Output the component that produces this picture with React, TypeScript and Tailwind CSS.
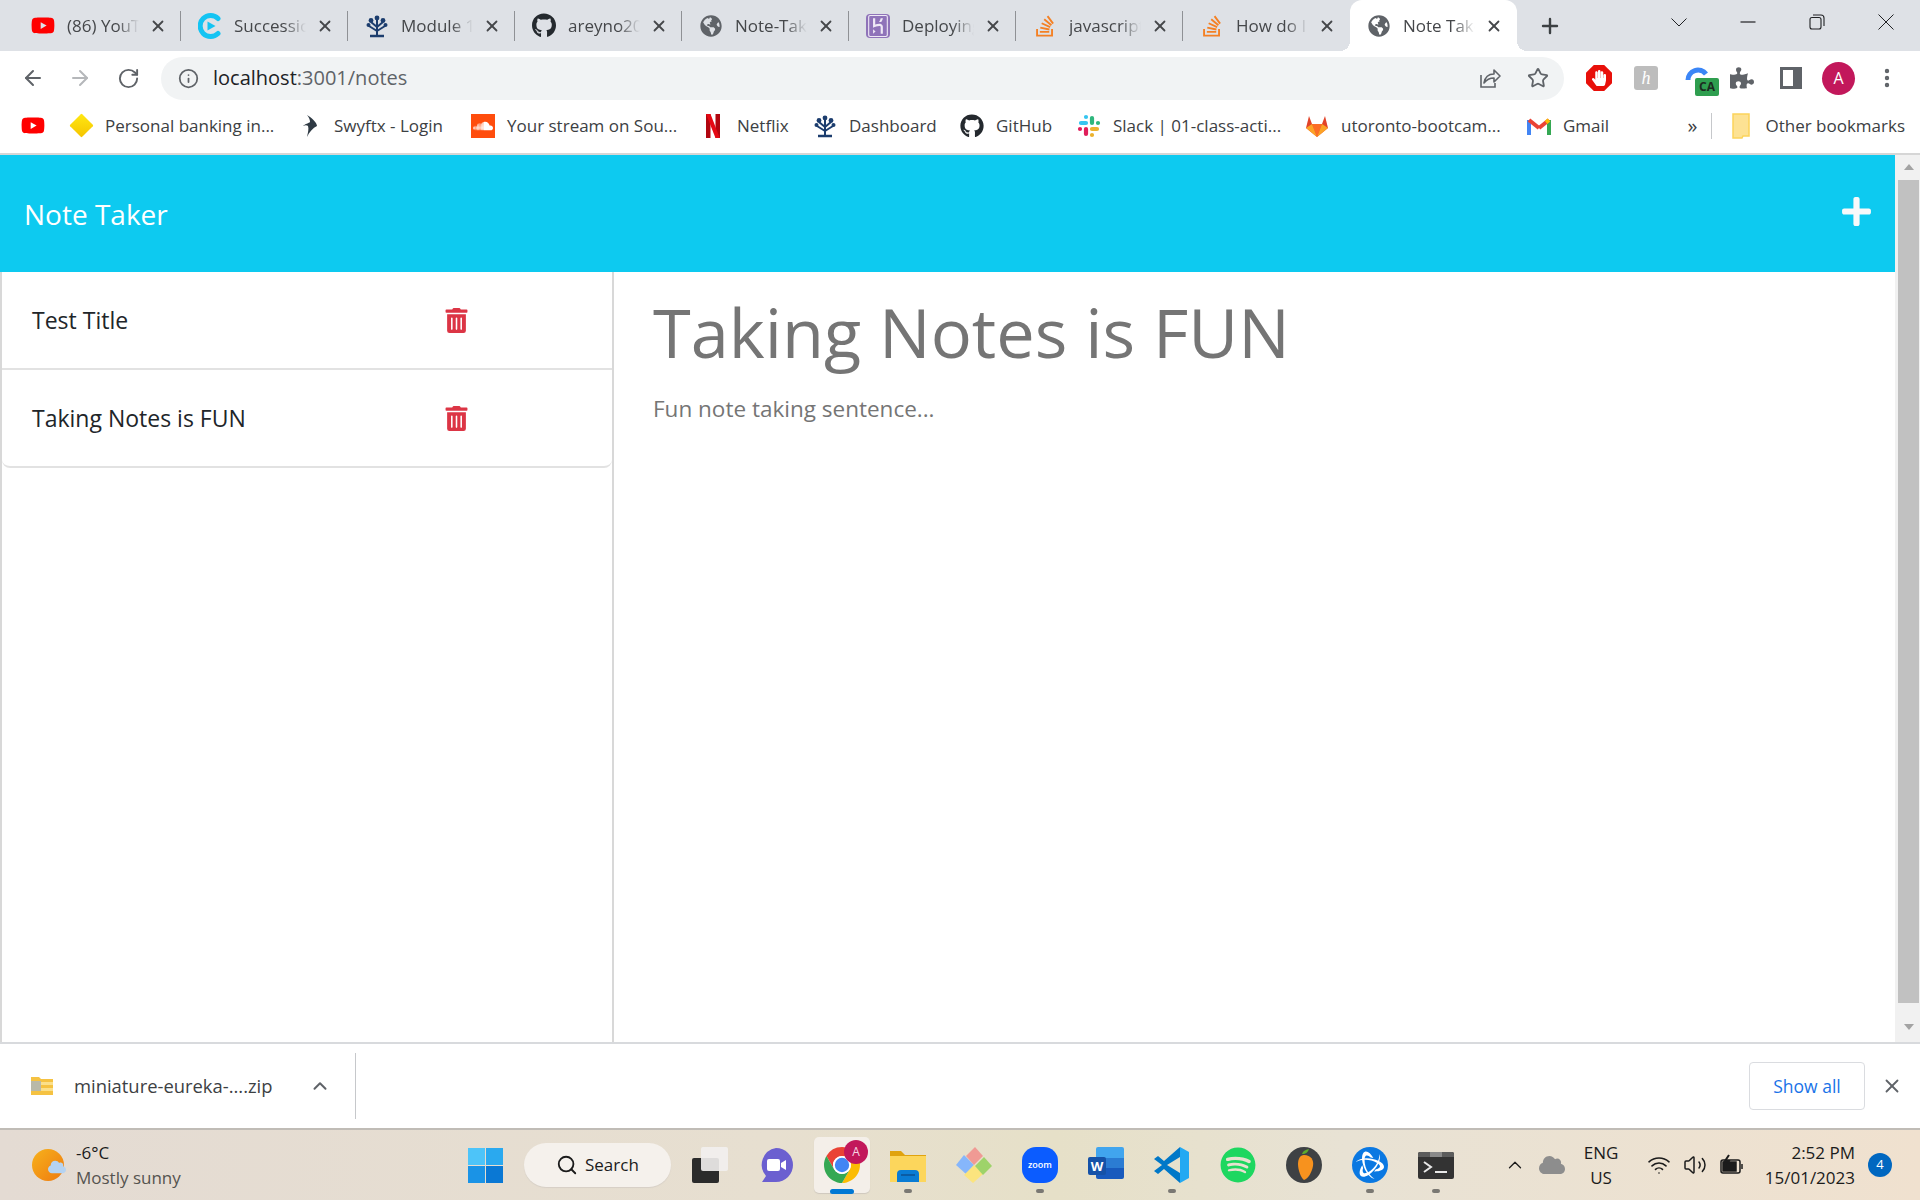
import { ArrowLeft, ArrowRight, ChevronUp, Info, MoreVertical, Plus, RotateCw, Search, Star, Volume2, Wifi, X } from "lucide-react";
import { FaCloud, FaGithub, FaGlobeAmericas, FaHandPaper, FaPlus, FaPuzzlePiece, FaSpotify, FaStackOverflow, FaTrashAlt, FaYoutube, FaSoundcloud } from "react-icons/fa";
import { SiBattledotnet, SiHeroku } from "react-icons/si";

const font = "font-['Open_Sans','Noto_Sans',sans-serif]";

function Tree({ size = 24 }: { size?: number }) {
  return (
    <svg width={size} height={size} viewBox="0 0 24 24" fill="none" stroke="#1c3d6e" strokeWidth="2">
      <path d="M12 21V5M12 13 6 8M12 13l6-5M12 17 4 12M12 17l8-5" />
      <path d="M5 22h14" strokeWidth="2.5" />
      <circle cx="12" cy="4" r="2.4" fill="#1c3d6e" stroke="none" />
      <circle cx="6" cy="6.5" r="2.4" fill="#1c3d6e" stroke="none" />
      <circle cx="18" cy="6.5" r="2.4" fill="#1c3d6e" stroke="none" />
      <circle cx="3.5" cy="11" r="2" fill="#1c3d6e" stroke="none" />
      <circle cx="20.5" cy="11" r="2" fill="#1c3d6e" stroke="none" />
    </svg>
  );
}

function SuccessIcon() {
  return (
    <svg width="24" height="26" viewBox="0 0 24 26">
      <path d="M20 5.5A10.5 10.5 0 1 0 20 20.5" fill="none" stroke="#14c4f3" strokeWidth="5" strokeLinecap="round" />
      <path d="M9.5 8.5 17.5 13l-8 4.500z" fill="#14c4f3" />
    </svg>
  );
}

function Globe() {
  return <FaGlobeAmericas size={22} color="#5f6368" />;
}

function HerokuIcon() {
  return (
    <span className="flex h-[24px] w-[24px] items-center justify-center rounded-[4px] bg-[#8f73b9]">
      <SiHeroku size={22} color="#eee8f5" />
    </span>
  );
}

const tabs = [
  { title: "(86) YouTube", icon: <FaYoutube size={25} color="#f00" /> },
  { title: "Succession", icon: <SuccessIcon /> },
  { title: "Module 13", icon: <Tree /> },
  { title: "areyno2022", icon: <FaGithub size={25} color="#24292e" /> },
  { title: "Note-Taker", icon: <Globe /> },
  { title: "Deploying", icon: <HerokuIcon /> },
  { title: "javascript", icon: <FaStackOverflow size={24} color="#f48024" /> },
  { title: "How do I", icon: <FaStackOverflow size={24} color="#f48024" /> },
];

function Tab({ title, icon, active, divider }: { title: string; icon: React.ReactNode; active?: boolean; divider?: boolean }) {
  return (
    <div
      className={
        active
          ? "relative flex h-[51px] w-[167px] items-center rounded-t-[12px] bg-white pl-[17px] before:absolute before:bottom-0 before:left-[-10px] before:h-[10px] before:w-[10px] before:bg-[radial-gradient(circle_at_0_0,#dee1e6_10px,#fff_10px)] after:absolute after:bottom-0 after:right-[-10px] after:h-[10px] after:w-[10px] after:bg-[radial-gradient(circle_at_100%_0,#dee1e6_10px,#fff_10px)]"
          : "relative flex h-[51px] w-[167px] items-center pl-[17px]"
      }
    >
      <span className="flex w-[24px] justify-center">{icon}</span>
      <span className="ml-[12px] w-[72px] overflow-hidden whitespace-nowrap text-[17px] text-[#45474a] [mask-image:linear-gradient(to_right,#000_70%,transparent)]">
        {title}
      </span>
      <X size={18} strokeWidth={2.4} className="ml-[10px] text-[#45474a]" />
      {divider && <span className="absolute right-0 top-[11px] h-[30px] w-px bg-[#8f9195]" />}
    </div>
  );
}

function TabStrip() {
  return (
    <div className="flex h-[51px] items-center bg-[#dee1e6] pl-[14px]">
      {tabs.map((t, i) => (
        <Tab key={i} title={t.title} icon={t.icon} divider={i < 7} />
      ))}
      <Tab title="Note Taker" icon={<Globe />} active />
      <Plus size={24} strokeWidth={2.4} className="ml-[21px] text-[#3c4043]" />
      <div className="mb-[8px] ml-auto flex items-center">
        <svg width="22" height="22" viewBox="0 0 22 22" fill="none" stroke="#202124" strokeWidth="1" className="mr-[48px]">
          <path d="M3.500 7.500 11 15l7.500-7.500" />
        </svg>
        <svg width="20" height="20" viewBox="0 0 20 20" fill="none" stroke="#202124" strokeWidth="1.200" className="mr-[51px]">
          <path d="M2.500 10h15" />
        </svg>
        <svg width="16" height="16" viewBox="0 0 16 16" fill="none" stroke="#202124" strokeWidth="1.100" className="mr-[50px]">
          <rect x="1" y="3.500" width="11" height="11.500" rx="2" />
          <path d="M4 1h8a3 3 0 0 1 3 3v8" />
        </svg>
        <svg width="22" height="22" viewBox="0 0 22 22" fill="none" stroke="#202124" strokeWidth="1" className="mr-[23px]">
          <path d="M3.500 3.500l15 15M18.500 3.500l-15 15" />
        </svg>
      </div>
    </div>
  );
}

function ShareIcon() {
  return (
    <svg width="24" height="24" viewBox="0 0 24 24" fill="none" stroke="#5f6368" strokeWidth="1.600" className="ml-auto">
      <path d="M3 9v12h14v-4" />
      <path d="M6 17c1-6 5-9 10-9V4l6 6-6 6v-4c-4 0-7 1-10 5z" strokeLinejoin="round" />
    </svg>
  );
}

function Toolbar() {
  return (
    <div className="flex h-[51px] items-center bg-white pl-[21px] pt-[3px] text-[#5f6368]">
      <ArrowLeft size={24} strokeWidth={2} />
      <ArrowRight size={24} strokeWidth={2} className="ml-[23px] text-[#b5b7ba]" />
      <RotateCw size={23} strokeWidth={2} className="ml-[25px]" />
      <div className="ml-[21px] flex h-[43px] w-[1403px] items-center rounded-full bg-[#f1f3f4] pl-[17px] pr-[15px]">
        <Info size={21} strokeWidth={2} />
        <span className="ml-[14px] text-[20px] text-[#202124]">
          localhost<span className="text-[#5f6368]">:3001/notes</span>
        </span>
        <ShareIcon />
        <Star size={22} strokeWidth={2} className="ml-[25px]" />
      </div>
      <div className="ml-[22px] flex items-center">
        <span className="relative flex h-[26px] w-[26px] items-center justify-center bg-[#e8100a] [clip-path:polygon(30%_0,70%_0,100%_30%,100%_70%,70%_100%,30%_100%,0_70%,0_30%)]">
          <FaHandPaper size={16} color="#fff" />
        </span>
        <span className="ml-[22px] flex h-[24px] w-[24px] items-center justify-center rounded-[3px] bg-[#bdbdbd] font-['Liberation_Serif',serif] text-[18px] italic leading-none text-white">
          h
        </span>
        <span className="relative ml-[27px] h-[32px] w-[32px]">
          <svg width="24" height="20" viewBox="0 0 24 20" fill="none" className="absolute left-0 top-0">
            <path d="M3 18A10 10 0 0 1 21 12" stroke="#3b86f7" strokeWidth="5" />
          </svg>
          <span className="absolute bottom-[-2px] right-[-2px] flex h-[18px] w-[24px] items-center justify-center rounded-[2px] bg-[#2e9e4f] text-[12px] font-bold leading-none text-[#1c2b20]">
            CA
          </span>
        </span>
        <FaPuzzlePiece size={24} className="ml-[13px]" />
        <span className="ml-[26px] flex h-[22px] w-[22px] justify-start border-[3px] border-r-[9px] border-[#5f6368]" />
        <span className="ml-[20px] flex h-[33px] w-[33px] items-center justify-center rounded-full bg-[#c2185b] text-[16px] text-white">A</span>
        <MoreVertical size={24} strokeWidth={2.4} className="ml-[20px]" />
      </div>
    </div>
  );
}

function Diamond() {
  return <span className="block h-[17px] w-[17px] rotate-45 rounded-[1px] bg-[linear-gradient(135deg,#ffe812,#f5c400)]" />;
}

function Swift() {
  return (
    <svg width="16" height="24" viewBox="0 0 16 24">
      <path d="M5 1c8 5 10 9 10 11-4 2-8 6-10 11 1-5 2-8 1-11-1-1-3-1-5 0 2-2 6-3 7-4C8 6 7 3 5 1z" fill="#2f3a44" />
    </svg>
  );
}

function Slack() {
  return (
    <svg width="24" height="24" viewBox="0 0 24 24" strokeWidth="4.200" strokeLinecap="round">
      <path d="M9 3v0M9 9H4" stroke="#36c5f0" />
      <path d="M21 9v0M15 9V4" stroke="#2eb67d" />
      <path d="M15 21v0M15 15h5" stroke="#ecb22e" />
      <path d="M3 15v0M9 15v5" stroke="#e01e5a" />
    </svg>
  );
}

function Gitlab() {
  return (
    <svg width="24" height="24" viewBox="0 0 24 24">
      <path d="M12 23 1 14l3-12 3 8h10l3-8 3 12z" fill="#e24329" />
      <path d="M12 23 7 10h10z" fill="#fc6d26" />
      <path d="M1 14l6-4 5 13z" fill="#fca326" />
      <path d="M23 14l-6-4-5 13z" fill="#fca326" />
    </svg>
  );
}

function Gmail() {
  return (
    <svg width="24" height="18" viewBox="0 0 24 18" fill="none">
      <path d="M2 18V3" stroke="#4285f4" strokeWidth="4" />
      <path d="M22 18V3" stroke="#34a853" strokeWidth="4" />
      <path d="M2 3l10 8" stroke="#ea4335" strokeWidth="4" />
      <path d="M12 11l10-8" stroke="#ea4335" strokeWidth="4" />
      <path d="M22 3l-3 2.400" stroke="#fbbc04" strokeWidth="4" />
    </svg>
  );
}

function Netflix() {
  return (
    <svg width="16" height="24" viewBox="0 0 16 24">
      <path d="M1 0h4.500v24L1 24.500z" fill="#b1060f" />
      <path d="M10.500 0H15v24.500L10.500 24z" fill="#b1060f" />
      <path d="M1 0h4.500L15 24.500 10.500 24z" fill="#e50914" />
    </svg>
  );
}

const bookmarks = [
  { icon: <FaYoutube size={25} color="#f00" />, text: "", width: "w-[48px]" },
  { icon: <Diamond />, text: "Personal banking in...", width: "w-[229px]" },
  { icon: <Swift />, text: "Swyftx - Login", width: "w-[173px]" },
  { icon: <span className="flex h-[24px] w-[24px] items-center justify-center bg-[#ff4d0d]"><FaSoundcloud size={20} color="#fff" /></span>, text: "Your stream on Sou...", width: "w-[230px]" },
  { icon: <Netflix />, text: "Netflix", width: "w-[112px]" },
  { icon: <Tree />, text: "Dashboard", width: "w-[147px]" },
  { icon: <FaGithub size={24} color="#24292e" />, text: "GitHub", width: "w-[117px]" },
  { icon: <Slack />, text: "Slack | 01-class-acti...", width: "w-[228px]" },
  { icon: <Gitlab />, text: "utoronto-bootcam...", width: "w-[222px]" },
  { icon: <Gmail />, text: "Gmail", width: "w-[100px]" },
];

function BookmarkBar() {
  return (
    <div className="flex h-[53px] items-center border-b-2 border-[#d6d6d6] bg-white pb-[4px] pl-[21px] text-[17px] text-[#3c4043]">
      {bookmarks.map((b, i) => (
        <div key={i} className={`flex shrink-0 items-center ${b.width}`}>
          <span className="flex w-[24px] justify-center">{b.icon}</span>
          {b.text && <span className="ml-[12px] whitespace-nowrap">{b.text}</span>}
        </div>
      ))}
      <span className="ml-auto text-[20px] leading-none">»</span>
      <span className="ml-[14px] h-[26px] w-px bg-[#c6c8cb]" />
      <svg width="20" height="26" viewBox="0 0 20 26" className="ml-[19px]">
        <path d="M2 1h16v22h-6l-1 2H2z" fill="#fde293" stroke="#fbd35b" strokeWidth="1.500" />
      </svg>
      <span className="ml-[14px] mr-[15px] whitespace-nowrap">Other bookmarks</span>
    </div>
  );
}

function NoteRow({ title, last }: { title: string; last?: boolean }) {
  return (
    <div className={`flex h-[98px] items-center border-b-2 border-[#e2e2e2] pl-[30px] ${last ? "rounded-b-[8px]" : ""}`}>
      <span className="w-[412px] pt-[1px] text-[23px] text-[#212529]">{title}</span>
      <FaTrashAlt size={25} color="#dc3545" />
    </div>
  );
}

function Scrollbar() {
  return (
    <div className="flex w-[25px] flex-col items-center bg-[#f1f1f1] pl-[2px]">
      <span className="mt-[9px] h-0 w-0 border-x-[5px] border-b-[6px] border-x-transparent border-b-[#a3a3a3]" />
      <span className="mt-[10px] h-[823px] w-[21px] bg-[#c1c1c1]" />
      <span className="mt-[21px] h-0 w-0 border-x-[5px] border-t-[6px] border-x-transparent border-t-[#a3a3a3]" />
    </div>
  );
}

function NotePage() {
  return (
    <div className="flex h-[887px] bg-white">
      <div className="flex min-w-0 flex-1 flex-col">
        <header className="flex h-[117px] shrink-0 items-center justify-between bg-[#0dcaf0] pl-[24px] pr-[22px]">
          <span className="text-[28px] text-white">Note Taker</span>
          <FaPlus size={33} color="#f8f9fa" className="mb-[4px]" />
        </header>
        <div className="flex min-h-0 flex-1">
          <aside className="w-[614px] shrink-0 border-x-2 border-[#d8d8d8]">
            <NoteRow title="Test Title" />
            <NoteRow title="Taking Notes is FUN" last />
          </aside>
          <main className="flex-1 pl-[39px]">
            <h1 className="mt-[14px] text-[68.500px] leading-[92px] text-[#757575]">Taking Notes is FUN</h1>
            <p className="mt-[14px] text-[22.500px] text-[#757575]">Fun note taking sentence...</p>
          </main>
        </div>
      </div>
      <Scrollbar />
    </div>
  );
}

function DownloadBar() {
  return (
    <div className="flex h-[86px] items-center border-t-2 border-[#d8dadd] bg-white pl-[30px] text-[#3c4043]">
      <svg width="24" height="20" viewBox="0 0 24 20">
        <path d="M1 1h8l2 2h12v16H1z" fill="#f5c242" />
        <path d="M1 6h22v3H1zM1 12h22v3H1z" fill="#fbe08a" />
        <rect x="1" y="5" width="10" height="10" fill="#b9b9a8" />
      </svg>
      <span className="ml-[20px] w-[235px] whitespace-nowrap text-[18.400px]">miniature-eureka-....zip</span>
      <ChevronUp size={22} strokeWidth={2.2} className="text-[#5f6368]" />
      <span className="ml-[24px] h-[66px] w-px bg-[#c6c8cb]" />
      <button className="ml-auto h-[48px] w-[116px] rounded-[4px] border border-[#dadce0] text-[17.500px] text-[#1a73e8]">Show all</button>
      <X size={22} strokeWidth={2} className="ml-[16px] mr-[17px] text-[#5f6368]" />
    </div>
  );
}

function TeamsIcon() {
  return (
    <svg width="36" height="36" viewBox="0 0 36 36">
      <path d="M18 1a17 17 0 0 1 17 17 17 17 0 0 1-17 17H4l4-6A17 17 0 0 1 18 1z" fill="#6b5fd0" />
      <rect x="9" y="12" width="13" height="12" rx="2" fill="#fff" />
      <path d="M23 16l5-3v10l-5-3z" fill="#fff" />
    </svg>
  );
}

function ChromeIcon() {
  return (
    <svg width="36" height="36" viewBox="4 4 40 40">
      <path d="M24 4A20 20 0 0 1 41.320 14H24a10 10 0 0 0-8.660 15L6.680 14A20 20 0 0 1 24 4z" fill="#ea4335" />
      <path d="M41.320 14H24a10 10 0 0 1 8.660 15L24 44A20 20 0 0 0 41.320 14z" fill="#fbbc04" />
      <path d="M6.680 14l8.660 15a10 10 0 0 0 17.320 0L24 44A20 20 0 0 1 6.680 14z" fill="#34a853" />
      <circle cx="24" cy="24" r="10" fill="#fff" />
      <circle cx="24" cy="24" r="8" fill="#4285f4" />
    </svg>
  );
}

function FolderIcon() {
  return (
    <svg width="36" height="36" viewBox="0 0 36 36">
      <path d="M0 4h11l4 4h21v5H0z" fill="#e0a30e" />
      <path d="M0 9h36v26H0z" fill="#fcd65c" />
      <path d="M7 35v-8a4 4 0 0 1 4-4h14a4 4 0 0 1 4 4v8z" fill="#0a7cd4" />
      <rect x="11" y="27" width="14" height="2" fill="#0b5ca3" />
    </svg>
  );
}

function PiecesIcon() {
  return (
    <svg width="36" height="36" viewBox="0 0 36 36">
      <path d="M18 18 8 8l-8 10 10 9z" fill="#86b6fb" />
      <path d="M18 18 8 28l9 8 10-9z" fill="#fbe47e" />
      <path d="M18 18 10 9l9-9 8 9z" fill="#f09a94" />
      <path d="M19 19l9-9 8 9-9 9z" fill="#9ed36a" />
    </svg>
  );
}

function ZoomIcon() {
  return (
    <span className="flex h-[36px] w-[36px] items-center justify-center rounded-[14px] bg-[#0b5cff] text-[9px] font-semibold text-white">zoom</span>
  );
}

function WordIcon() {
  return (
    <span className="relative block h-[36px] w-[36px]">
      <span className="absolute right-0 top-0 grid h-[32px] w-[28px] grid-rows-3 overflow-hidden rounded-[2px]">
        <span className="bg-[#41a5ee]" />
        <span className="bg-[#2b7cd3]" />
        <span className="bg-[#185abd]" />
      </span>
      <span className="absolute bottom-[8px] left-0 flex h-[18px] w-[18px] items-center justify-center rounded-[2px] bg-[#1552a8] text-[13px] font-bold leading-none text-white">W</span>
    </span>
  );
}

function VsCodeIcon() {
  return (
    <svg width="36" height="36" viewBox="0 0 36 36">
      <path d="M26 0 35 5v26l-9 5z" fill="#23a9f2" />
      <path d="M26 0v10L13 18l13 8v10L10 22l-6 5-4-3 8-6-8-6 4-3 6 5z" fill="#0078c8" />
    </svg>
  );
}

function FlIcon() {
  return (
    <span className="relative flex h-[36px] w-[36px] items-center justify-center rounded-full bg-[#3e4144]">
      <svg width="24" height="32" viewBox="0 0 24 32">
        <path d="M12 6c7 0 10 5 9 11-1 6-5 13-9 14-3-2-6-10-6-16 0-5 2-9 6-9z" fill="#f7921e" />
        <path d="M10 5c1-3 3-4 7-5-1 3-3 5-7 5z" fill="#5dab2c" />
      </svg>
    </span>
  );
}

function BnetIcon() {
  return (
    <span className="flex h-[36px] w-[36px] items-center justify-center rounded-full bg-[#0a78e2]">
      <SiBattledotnet size={28} color="#fff" />
    </span>
  );
}

function TerminalIcon() {
  return (
    <span className="block h-[27px] w-[36px] overflow-hidden rounded-[2px] bg-[#333]">
      <svg width="36" height="27" viewBox="0 0 36 27">
        <rect width="36" height="5" fill="#5c5c5c" />
        <rect x="12" width="12" height="5" fill="#8a8a8a" />
        <path d="M6 10l7 5-7 5" fill="none" stroke="#e8e8e8" strokeWidth="2" />
        <rect x="17" y="19" width="12" height="2" fill="#e8e8e8" />
      </svg>
    </span>
  );
}

const apps = [
  { icon: <FolderIcon />, dot: true },
  { icon: <PiecesIcon />, dot: false },
  { icon: <ZoomIcon />, dot: true },
  { icon: <WordIcon />, dot: false },
  { icon: <VsCodeIcon />, dot: true },
  { icon: <FaSpotify size={36} color="#1ed760" />, dot: false },
  { icon: <FlIcon />, dot: false },
  { icon: <BnetIcon />, dot: true },
  { icon: <TerminalIcon />, dot: true },
];

function AppSlot({ children, dot }: { children: React.ReactNode; dot?: boolean }) {
  return (
    <div className="relative flex h-[36px] w-[36px] items-center justify-center">
      {children}
      {dot && <span className="absolute bottom-[-10px] left-[14px] h-[4px] w-[8px] rounded-full bg-[#7a7873]" />}
    </div>
  );
}

function Taskbar() {
  return (
    <div className="flex h-[72px] items-center border-t-2 border-[#c0bcb6] bg-[linear-gradient(90deg,#e4dbd3_0%,#e7dfd0_40%,#e6e0c8_55%,#e8e2d4_70%,#f0e1cf_100%)] text-[#1b1b1b]">
      <div className="flex w-[468px] shrink-0 items-center pl-[32px]">
        <span className="relative block h-[32px] w-[32px] rounded-full bg-[linear-gradient(135deg,#f7b21c,#ee7a10)]">
          <FaCloud size={18} color="#b5d3f2" className="absolute bottom-[5px] right-[-2px]" />
        </span>
        <div className="ml-[12px] text-[17px] leading-[25px]">
          <div>-6°C</div>
          <div className="text-[#55534f]">Mostly sunny</div>
        </div>
      </div>
      <div className="grid h-[35px] w-[35px] shrink-0 grid-cols-2 gap-[1px]">
        <span className="bg-[#4dc4f9]" />
        <span className="bg-[#2aa9ef]" />
        <span className="bg-[#1a93e6]" />
        <span className="bg-[#0a78d4]" />
      </div>
      <div className="ml-[21px] flex h-[44px] w-[147px] shrink-0 items-center rounded-full bg-[#f5f1ec] pl-[32px] text-[17px] shadow-[0_1px_1px_#d6cfc6]">
        <Search size={22} strokeWidth={2} />
        <span className="ml-[7px]">Search</span>
      </div>
      <div className="ml-[21px] flex shrink-0 items-center gap-[30px]">
        <AppSlot>
          <span className="relative block h-[36px] w-[36px]">
            <span className="absolute bottom-0 left-0 h-[25px] w-[27px] rounded-[2px] bg-[#2b2b2b]" />
            <span className="absolute right-0 top-0 h-[24px] w-[27px] rounded-[2px] bg-[#f2f0ee]/90" />
          </span>
        </AppSlot>
        <AppSlot><TeamsIcon /></AppSlot>
        <div className="relative flex h-[36px] w-[36px] items-center justify-center">
          <span className="absolute left-[-10px] top-[-10px] h-[56px] w-[56px] rounded-[5px] bg-[#f4efe9] shadow-[0_1px_1px_#cfc8be]" />
          <span className="relative block"><ChromeIcon /></span>
          <span className="absolute left-[20px] top-[-7px] flex h-[24px] w-[24px] items-center justify-center rounded-full bg-[#c2185b] text-[12px] text-[#f7d6e3]">A</span>
          <span className="absolute bottom-[-11px] left-[6px] h-[5px] w-[24px] rounded-full bg-[#0078d4]" />
        </div>
        {apps.map((a, i) => (
          <AppSlot key={i} dot={a.dot}>{a.icon}</AppSlot>
        ))}
      </div>
      <div className="ml-[50px] flex shrink-0 items-center">
        <ChevronUp size={22} strokeWidth={1.4} />
        <FaCloud size={26} color="#8d8d8d" className="ml-[13px]" />
        <div className="ml-[14px] w-[44px] text-center text-[17px] leading-[25px]">
          <div>ENG</div>
          <div>US</div>
        </div>
        <Wifi size={24} strokeWidth={1.6} className="ml-[24px]" />
        <Volume2 size={24} strokeWidth={1.5} className="ml-[12px]" />
        <svg width="24" height="22" viewBox="0 0 24 22" className="ml-[13px]" fill="none" stroke="#1b1b1b" strokeWidth="1.500">
          <rect x="1" y="6" width="19" height="13" rx="2" />
          <rect x="3" y="8" width="13" height="9" fill="#1b1b1b" />
          <path d="M22 10v5" />
          <path d="M9 1 5 7h4l-2 5" strokeWidth="2" />
        </svg>
        <div className="ml-[16px] w-[95px] text-right text-[17px] leading-[25px]">
          <div>2:52 PM</div>
          <div className="whitespace-nowrap">15/01/2023</div>
        </div>
        <span className="ml-[13px] flex h-[24px] w-[24px] items-center justify-center rounded-full bg-[#0067c0] text-[13px] text-white">4</span>
      </div>
    </div>
  );
}

export default function App() {
  return (
    <div className={`flex h-[1200px] w-[1920px] flex-col overflow-hidden ${font}`}>
      <TabStrip />
      <Toolbar />
      <BookmarkBar />
      <NotePage />
      <DownloadBar />
      <Taskbar />
    </div>
  );
}
